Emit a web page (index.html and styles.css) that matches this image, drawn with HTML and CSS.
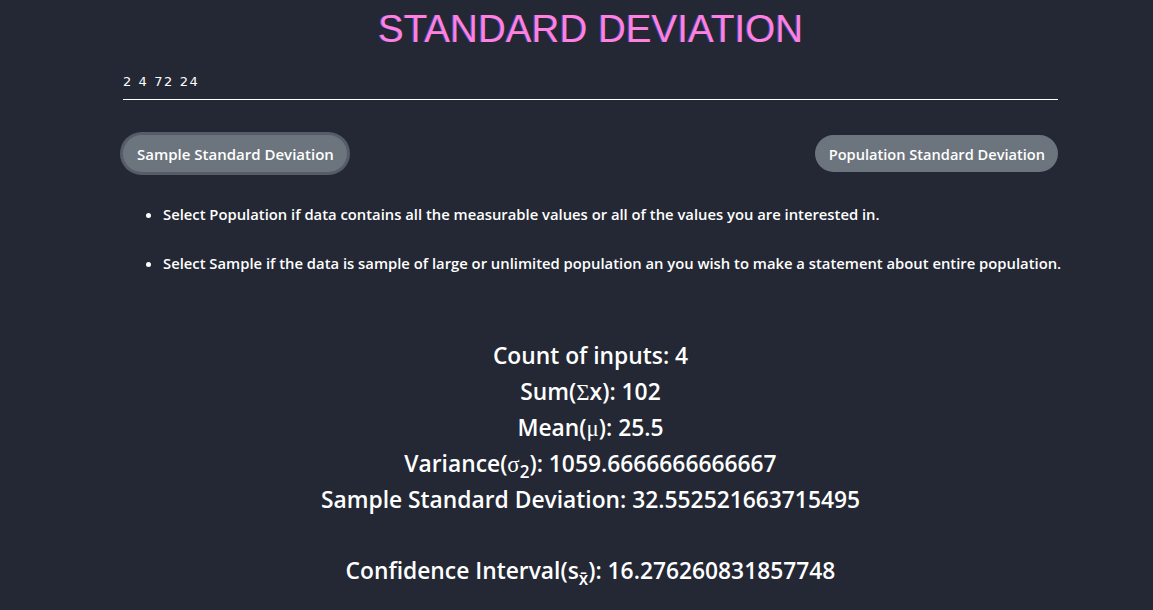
FILE: index.html
```html
<!DOCTYPE html>
<html>
<head>
<meta charset="utf-8">
<link rel="stylesheet" href="styles.css">
</head>
<body>
<div class="container">
  <h1 class="title">STANDARD DEVIATION</h1>
  <div class="input-wrap">
    <input class="data-input" type="text" value="2 4 72 24">
  </div>
  <div class="buttons">
    <button class="btn btn-active">Sample Standard Deviation</button>
    <button class="btn btn-pop">Population Standard Deviation</button>
  </div>
  <ul class="notes">
    <li>Select Population if data contains all the measurable values or all of the values you are interested in.</li>
    <li>Select Sample if the data is sample of large or unlimited population an you wish to make a statement about entire population.</li>
  </ul>
  <div class="results">
    <p>Count of inputs: 4</p>
    <p>Sum(<span class="sym">Σ</span>x): 102</p>
    <p>Mean(<span class="sym">μ</span>): 25.5</p>
    <p>Variance(<span class="sym">σ</span><sub>2</sub>): 1059.6666666666667</p>
    <p>Sample Standard Deviation: 32.552521663715495</p>
    <p class="ci">Confidence Interval(s<sub>x̄</sub>): 16.276260831857748</p>
  </div>
</div>
</body>
</html>
```
FILE: styles.css
```css
html, body {
  margin: 0;
  padding: 0;
  background: #232834;
  color: #ffffff;
  font-family: "Open Sans", "Noto Sans", sans-serif;
}
.container {
  width: 935px;
  margin-left: 123px;
}
.title {
  margin: 0;
  padding-top: 9px;
  text-align: center;
  font-family: "Liberation Sans", Arial, sans-serif;
  font-weight: 400;
  font-size: 38.6px;
  line-height: 40px;
  color: #ff80e0;
  text-shadow: -1px 0 0 rgba(90,100,255,0.6);
}
.input-wrap {
  margin-top: 20px;
}
.data-input {
  width: 100%;
  box-sizing: border-box;
  background: transparent;
  border: none;
  border-bottom: 1px solid #ffffff;
  color: #ffffff;
  font-family: "DejaVu Sans", sans-serif;
  font-size: 13px;
  letter-spacing: 1.6px;
  padding: 0 0 10px 0;
  outline: none;
}
.buttons {
  display: flex;
  justify-content: space-between;
  align-items: center;
  margin-top: 35px;
}
.btn {
  background: #6c757d;
  color: #ffffff;
  border: none;
  border-radius: 19px;
  height: 37px;
  padding: 0 13px 0 14px;
  font-family: "Open Sans", sans-serif;
  font-weight: 600;
  font-size: 15px;
}
.btn-pop {
  font-size: 14.6px;
}
.btn-active {
  box-shadow: 0 0 0 3px #565c68;
}
.notes {
  margin: 32px 0 0 0;
  padding-left: 40px;
  font-size: 14.8px;
  font-weight: 600;
}
.notes li {
  line-height: 20px;
  margin-bottom: 29px;
  white-space: nowrap;
}
.results {
  margin-top: 65px;
  text-align: center;
  font-size: 22.8px;
  font-weight: 600;
}
.results p {
  margin: 0;
  height: 36px;
  line-height: 36px;
}
.results .ci {
  margin-top: 35px;
}
.sym {
  font-family: "Liberation Serif", serif;
  font-weight: 400;
}
sub {
  font-size: 0.75em;
  line-height: 0;
}
```
